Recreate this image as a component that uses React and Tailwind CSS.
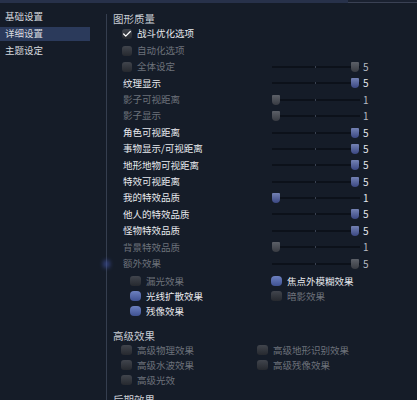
import { Check } from "lucide-react";

const font = { fontFamily: '"Noto Sans CJK SC", "Noto Sans", sans-serif' };

const sliderRows = [
  { label: "纹理显示", value: 5, on: true },
  { label: "影子可视距离", value: 1, on: false },
  { label: "影子显示", value: 1, on: false },
  { label: "角色可视距离", value: 5, on: true },
  { label: "事物显示/可视距离", value: 5, on: true },
  { label: "地形地物可视距离", value: 5, on: true },
  { label: "特效可视距离", value: 5, on: true },
  { label: "我的特效品质", value: 1, on: true },
  { label: "他人的特效品质", value: 5, on: true },
  { label: "怪物特效品质", value: 5, on: true },
  { label: "背景特效品质", value: 1, on: false },
  { label: "额外效果", value: 5, on: false },
];

function Slider({ value, on }) {
  const left = value === 5;
  return (
    <div className="flex items-center">
      <div className="relative h-[10px] w-[88px]">
        <div className="absolute left-0 right-0 top-[4px] h-[2px] bg-[#0c111a]" />
        <div className="absolute left-[43px] top-[4px] h-[2px] w-[1px] bg-[#3a4252]" />
        <div
          className={`absolute top-0 h-[10px] w-[8px] rounded-t-[1px] rounded-b-[4px] bg-gradient-to-b ${
            on ? "from-[#7482b4] to-[#3b4782]" : "from-[#5c6068] to-[#383b42]"
          } ${left ? "left-[79px]" : "left-0"}`}
        />
      </div>
      <span className={`ml-[3px] text-[10px] leading-none ${on ? "text-[#e4e7ec]" : "text-[#b6bac2]"}`}>{value}</span>
    </div>
  );
}

function Box({ kind = "off", size = "h-[10px] w-[10px]" }) {
  if (kind === "blue") {
    return <span className={`${size} rounded-[4px] bg-gradient-to-b from-[#6d81c0] to-[#3f5192]`} />;
  }
  return (
    <span className={`${size} flex items-center justify-center rounded-[3px] bg-gradient-to-b from-[#41454d] to-[#26292f]`}>
      {kind === "check" ? <Check size={10} strokeWidth={3} className="text-white" /> : null}
    </span>
  );
}

function Opt({ label, kind, dim, size }) {
  return (
    <div className="flex items-center gap-[5px]">
      <Box kind={kind} size={size} />
      <span className={`text-[9.5px] leading-none ${dim ? "text-[#6d727b]" : "text-[#e8eaee]"}`}>{label}</span>
    </div>
  );
}

export default function App() {
  return (
    <div className="flex h-[400px] w-[417px] flex-col overflow-hidden bg-[#151c28]" style={font}>
      <div className="flex h-[3px] shrink-0">
        <div className="h-full w-[348px] bg-[#27314a]" />
        <div className="h-full flex-1 border-b border-[#3a4154] bg-[#1a2130]" />
      </div>
      <div className="flex flex-1">
        <aside className="flex w-[106px] shrink-0 flex-col pt-[7px]">
          {["基础设置", "详细设置", "主题设定"].map((item, i) => (
            <div
              key={item}
              className={`flex h-[14px] w-[90px] items-center pl-[5px] text-[9.5px] leading-none text-[#d6d9df] ${
                i === 1 ? "my-[3px] bg-[#2b3a5b]" : ""
              }`}
            >
              {item}
            </div>
          ))}
        </aside>
        <div className="relative mt-[11px] w-[1px] shrink-0 bg-[#353e4f]">
          <div className="absolute left-[-3px] top-[246px] h-[8px] w-[7px] rounded-full bg-[#4658b0] opacity-60 blur-[2px]" />
        </div>
        <main className="flex flex-1 flex-col pl-[6px] pt-[9px]">
          <div className="flex h-[14px] items-center text-[10.5px] leading-none text-[#c9cdd4]">图形质量</div>
          <div className="flex flex-col pl-[9px]">
            <div className="flex h-[16.4px] items-center">
              <Opt label="战斗优化选项" kind="check" />
            </div>
            <div className="flex h-[16.4px] items-center">
              <Opt label="自动化选项" dim />
            </div>
            <div className="flex h-[16.4px] items-center">
              <div className="w-[150px]">
                <Opt label="全体设定" dim />
              </div>
              <Slider value={5} on={false} />
            </div>
          </div>
          <div className="flex flex-col pl-[10px]">
            {sliderRows.map((row) => (
              <div key={row.label} className="flex h-[16.4px] items-center">
                <span
                  className={`w-[149px] text-[9.5px] leading-none ${row.on ? "text-[#e8eaee]" : "text-[#6d727b]"}`}
                >
                  {row.label}
                </span>
                <Slider value={row.value} on={row.on} />
              </div>
            ))}
          </div>
          <div className="grid grid-cols-[141px_1fr] pl-[17px] pt-[2px]">
            <div className="flex h-[15px] items-center">
              <Opt label="漏光效果" dim size="h-[10px] w-[11px]" />
            </div>
            <div className="flex h-[15px] items-center">
              <Opt label="焦点外模糊效果" kind="blue" size="h-[10px] w-[11px]" />
            </div>
            <div className="flex h-[15px] items-center">
              <Opt label="光线扩散效果" kind="blue" size="h-[10px] w-[11px]" />
            </div>
            <div className="flex h-[15px] items-center">
              <Opt label="暗影效果" dim size="h-[10px] w-[11px]" />
            </div>
            <div className="flex h-[15px] items-center">
              <Opt label="残像效果" kind="blue" size="h-[10px] w-[11px]" />
            </div>
          </div>
          <div className="flex h-[23px] items-end text-[10.5px] leading-none text-[#c9cdd4]">高级效果</div>
          <div className="grid grid-cols-[136px_1fr] pl-[8px] pt-[1px]">
            <div className="flex h-[15px] items-center">
              <Opt label="高级物理效果" dim size="h-[10px] w-[11px]" />
            </div>
            <div className="flex h-[15px] items-center">
              <Opt label="高级地形识别效果" dim size="h-[10px] w-[11px]" />
            </div>
            <div className="flex h-[15px] items-center">
              <Opt label="高级水波效果" dim size="h-[10px] w-[11px]" />
            </div>
            <div className="flex h-[15px] items-center">
              <Opt label="高级残像效果" dim size="h-[10px] w-[11px]" />
            </div>
            <div className="flex h-[15px] items-center">
              <Opt label="高级光效" dim size="h-[10px] w-[11px]" />
            </div>
          </div>
          <div className="pt-[7px] text-[10.5px] leading-none text-[#c9cdd4]">后期效果</div>
        </main>
      </div>
    </div>
  );
}
